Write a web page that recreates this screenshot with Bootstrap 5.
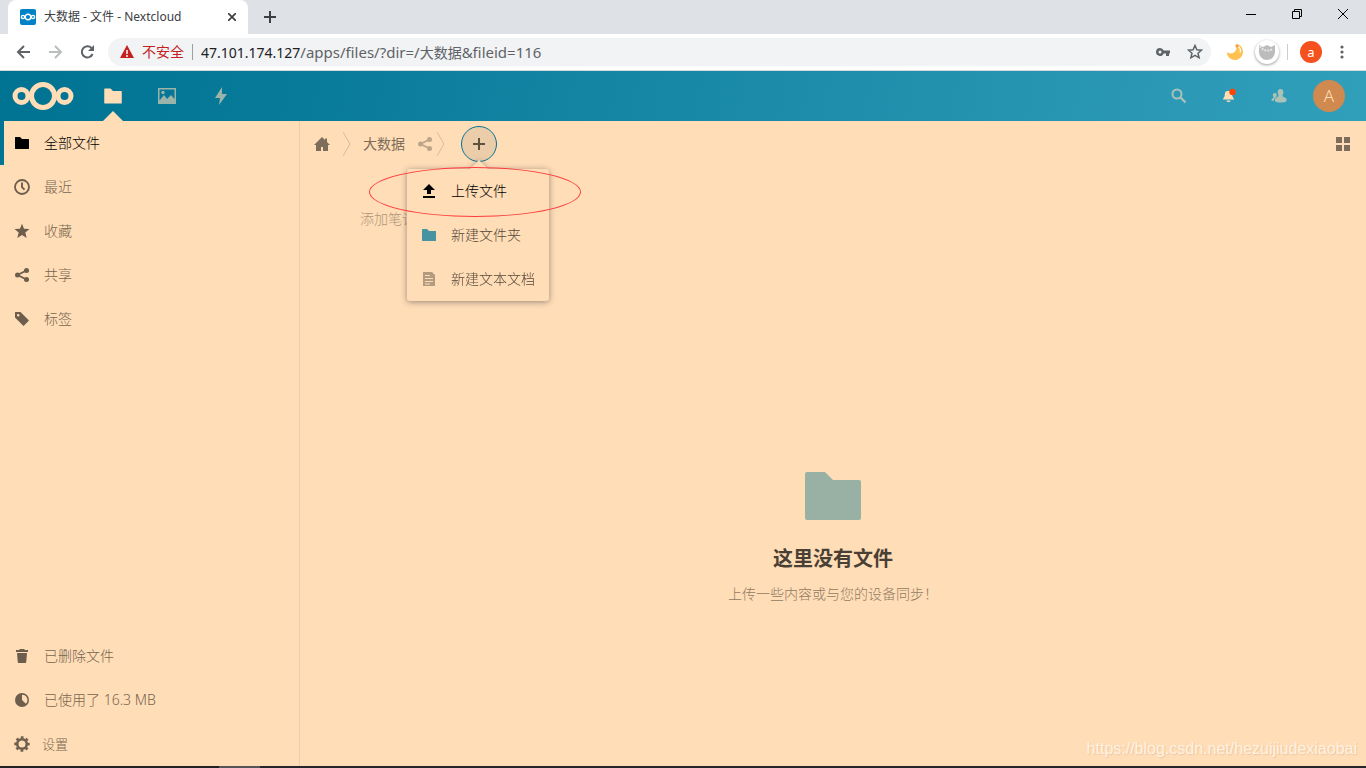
<!DOCTYPE html>
<html lang="zh-CN">
<head>
<meta charset="utf-8">
<meta name="viewport" content="width=device-width, initial-scale=1">
<title>大数据 - 文件 - Nextcloud</title>
<link href="https://cdn.jsdelivr.net/npm/bootstrap@5.3.0/dist/css/bootstrap.min.css" rel="stylesheet">
<style>
  :root { --paper: #ffddb7; --teal: #007494; }
  body { font-family: "Noto Sans", "Noto Sans CJK SC", sans-serif; font-size: 14px; line-height: 20px; background: var(--paper); color: #1e1a15; }
  button, input { font: inherit; color: inherit; }
  button { border: 0; background: none; padding: 0; display: flex; align-items: center; justify-content: center; }
  a { color: inherit; text-decoration: none; }
  svg { display: block; flex: none; }

  .tabstrip { height: 34px; background: #dee1e6; }
  .browser-tab { width: 240px; background: #fff; border-radius: 8px 8px 0 0; font-size: 12px; color: #3c4043; }
  .window-btn { width: 46px; height: 28px; color: #000; }
  .toolbar-row { height: 37px; background: #fff; border-bottom: 1px solid #d5d8dc; color: #5f6368; }
  .tool-btn { width: 32px; height: 32px; }
  .omnibox { height: 28px; border-radius: 14px; background: #f1f3f4; }
  .insecure { color: #c5221f; }
  .url-divider { width: 1px; height: 16px; background: #9aa0a6; }
  .url-host { color: #202124; }
  .url-path { font-size: 15px; }
  .ext-round { width: 24px; height: 24px; border-radius: 50%; background: #fff; box-shadow: 0 1px 3px #0006; }
  .profile { width: 22px; height: 22px; border-radius: 50%; background: #f4511e; color: #fff; font-size: 13px; line-height: 20px; }

  .cloud-header { height: 50px; background: linear-gradient(100deg, #007392 0%, #0a7c9b 25%, #2b99b6 85%, #309fba 100%); color: var(--paper); }
  .app-link { width: 54px; height: 50px; }
  .app-link.current::after { content: ""; position: absolute; bottom: 0; left: 50%; margin-left: -10px; border: 10px solid transparent; border-top: 0; border-bottom-color: var(--paper); }
  .dim { opacity: .6; }
  .head-btn { width: 50px; height: 50px; }
  .avatar { width: 32px; height: 32px; border-radius: 50%; background: #d0894f; color: var(--paper); font-size: 17px; font-weight: 300; }

  .sidebar { width: 300px; border-right: 1px solid #edcdaa; font-weight: 300; }
  .side-item { height: 44px; padding-left: 14px; gap: 14px; color: #78664f; }
  .side-item svg { color: #6c5d4c; width: 16px; height: 16px; }
  .side-item.current { color: #000; box-shadow: inset 4px 0 var(--teal); }
  .side-item.current svg { color: #000; }
  .side-item.settings { font-size: 13px; gap: 12px; width: 100%; justify-content: flex-start; }

  .crumbs { height: 46px; color: #7e6d5a; }
  .crumb-home { width: 43px; height: 44px; }
  .add-btn { width: 36px; height: 36px; border-radius: 50%; border: 1px solid var(--teal); background: #eccdaa; color: #5e5142; }
  .add-menu { top: 43px; left: -54px; width: 142px; background: var(--paper); border-radius: 3px; filter: drop-shadow(0 1px 3px #4d424b90); z-index: 2; font-weight: 300; }
  .add-menu::before { content: ""; position: absolute; top: -9px; left: 63px; border: 9px solid transparent; border-top: 0; border-bottom-color: var(--paper); }
  .menu-btn { height: 44px; width: 100%; padding-left: 14px; gap: 14px; justify-content: flex-start; color: #554839; white-space: nowrap; }
  .menu-btn.current { color: #000; }
  .marker-ring { top: 41px; left: -92px; width: 212px; height: 50px; border: 1px solid #ff3a3a; border-radius: 50%; z-index: 3; pointer-events: none; }
  .note-input { width: 160px; margin: 42px 0 0 60px; padding: 0; height: 20px; border: 0; background: none; font-weight: 300; }
  .note-input::placeholder { color: #b0967b; opacity: 1; }
  .empty-title { font-size: 20px; line-height: 30px; font-weight: 700; color: #493f34; margin: 24px 0 10px; }
  .empty-text { color: #917b64; font-weight: 300; }
  .empty-box { padding-top: 80px; }
  .watermark { right: 9px; bottom: 7px; font: 16px/20px "Liberation Sans", sans-serif; color: #fff2e1; text-shadow: 1px 1px 1px #d9b89488; }
  .taskbar-edge { height: 2px; background: linear-gradient(90deg, #222 0 16%, #555 16% 19%, #25252b 19%); }
</style>
</head>
<body class="vh-100 d-flex flex-column overflow-hidden">

<svg class="d-none" aria-hidden="true">
  <symbol id="folder" viewBox="0 0 16 16"><path fill="currentColor" d="M1.5 2a.5.5 0 0 0-.5.5v11c0 .3.2.5.5.5h13c.3 0 .5-.2.5-.5v-9a.5.5 0 0 0-.5-.5H8L6 2z"/></symbol>
  <symbol id="share" viewBox="0 0 16 16"><path fill="none" stroke="currentColor" stroke-width="1.8" d="M12.500 3.500 3.500 8l9 4.500"/><g fill="currentColor"><circle cx="12.500" cy="3.500" r="2.500"/><circle cx="3.500" cy="8" r="2.500"/><circle cx="12.500" cy="12.500" r="2.500"/></g></symbol>
  <symbol id="rings" viewBox="0 0 62 28"><g fill="none" stroke="currentColor" stroke-width="5"><circle cx="31" cy="14" r="11.500"/><circle cx="9.500" cy="14" r="6.500"/><circle cx="52.500" cy="14" r="6.500"/></g></symbol>
</svg>

<div class="tabstrip d-flex flex-shrink-0">
  <div class="browser-tab ms-2 d-flex align-items-center px-2">
    <svg class="ms-1 me-2" width="16" height="16"><rect width="16" height="16" rx="2" fill="#0082c9"/><g fill="none" stroke="#fff" stroke-width="1.400"><circle cx="8" cy="8" r="2.800"/><circle cx="3" cy="8" r="1.600"/><circle cx="13" cy="8" r="1.600"/></g></svg>
    <span class="flex-fill">大数据 - 文件 - Nextcloud</span>
    <button aria-label="关闭标签页" class="me-1"><svg width="8" height="8"><path d="m0 0 8 8M8 0 0 8" stroke="#3c4043" stroke-width="1.700"/></svg></button>
  </div>
  <button aria-label="新标签页" class="ms-3"><svg width="12" height="12"><path d="M6 0v12M0 6h12" stroke="#3c4043" stroke-width="2"/></svg></button>
  <div class="ms-auto d-flex">
    <button class="window-btn" aria-label="最小化"><svg width="10" height="10"><path d="M0 5.500h10" stroke="#000"/></svg></button>
    <button class="window-btn" aria-label="还原"><svg width="10" height="10"><path d="M.5 2.500h7v7h-7zM2.500 2.500v-2h7v7h-2" fill="none" stroke="#000"/></svg></button>
    <button class="window-btn" aria-label="关闭"><svg width="10" height="10"><path d="m0 0 10 10M10 0 0 10" stroke="#000"/></svg></button>
  </div>
</div>

<div class="toolbar-row d-flex align-items-center flex-shrink-0 px-1">
  <button class="tool-btn ms-1" aria-label="后退"><svg width="16" height="16"><path d="M14 8H2m6-6L2 8l6 6" fill="none" stroke="#5f6368" stroke-width="2"/></svg></button>
  <button class="tool-btn" aria-label="前进"><svg width="16" height="16"><path d="M1 8h12M7 2l6 6-6 6" fill="none" stroke="#babcbe" stroke-width="2"/></svg></button>
  <button class="tool-btn me-1" aria-label="刷新"><svg width="16" height="16"><path d="M12.600 10A5.600 5.600 0 1 1 11.500 4" fill="none" stroke="#5f6368" stroke-width="2"/><path d="M14 1v6H8z" fill="#5f6368"/></svg></button>
  <div class="omnibox flex-fill d-flex align-items-center ps-2">
    <svg class="ms-1 me-1" width="14" height="14"><path d="m7 0 7 13H0z" fill="#c5221f"/><path d="M7 5v4M7 10v2" stroke="#fff" stroke-width="1.500"/></svg>
    <span class="insecure ms-1">不安全</span>
    <span class="url-divider mx-2"></span>
    <span class="flex-fill text-truncate"><span class="url-host">47.101.174.127</span><span class="url-path">/apps/files/?dir=/</span>大数据<span class="url-path">&amp;fileid=116</span></span>
    <button class="tool-btn" aria-label="密码"><svg width="14" height="8"><path fill="#5f6368" fill-rule="evenodd" d="M4 0a4 4 0 0 1 3.700 2.500H14v3h-1V8h-3V5.500H7.700A4 4 0 1 1 4 0m0 2.500a1.500 1.500 0 1 0 0 3 1.500 1.500 0 0 0 0-3"/></svg></button>
    <button class="tool-btn" aria-label="收藏此页"><svg width="16" height="16"><path d="m8 1.500 1.900 4.300 4.600.4L11 9.300l1.100 4.500L8 11.400l-4.100 2.400L5 9.300 1.500 6.200l4.600-.4z" fill="none" stroke="#5f6368" stroke-width="1.500"/></svg></button>
  </div>
  <div class="d-flex align-items-center">
    <button class="ms-3 me-2" aria-label="夜间模式"><svg width="16" height="16" viewBox="0 0 16 16"><path fill="#ffc150" d="M8.500 0C15 .5 17 6 15.500 10.500 14 15 9 17 5 15.500A8 8 0 0 1 0 8c2 2 6 2 8-.500S10 2 8.500 0"/><path d="M11.500 2.500c2 2 2.500 4 1.500 6" fill="none" stroke="#fff" stroke-width="1.300"/><circle cx="10" cy="2" r="1.500" fill="#f8993e"/></svg></button>
    <button class="ext-round ms-1" aria-label="扩展程序"><svg width="18" height="18"><path d="M1 2 5 4l4-2 4 2 4-2v7a8 8 0 0 1-16 0z" fill="#bcbcbc"/><path d="M2 3q4 7 13 3" stroke="#e4e4e4" stroke-width="2" stroke-dasharray="2 1" fill="none"/></svg></button>
    <span class="url-divider mx-2 opacity-50"></span>
    <button class="profile ms-1" aria-label="个人资料">a</button>
    <button class="tool-btn ms-1 me-1" aria-label="菜单"><svg width="4" height="14" fill="#5f6368"><circle cx="2" cy="2" r="1.600"/><circle cx="2" cy="7" r="1.600"/><circle cx="2" cy="12" r="1.600"/></svg></button>
  </div>
</div>

<header class="cloud-header d-flex align-items-center flex-shrink-0">
  <a href="#" class="ms-2 me-2 ps-1" aria-label="Nextcloud"><svg width="62" height="28"><use href="#rings"/></svg></a>
  <nav class="d-flex ms-1" aria-label="应用">
    <a href="#" class="app-link current position-relative d-flex align-items-center justify-content-center" aria-label="文件"><svg width="20" height="20"><use href="#folder"/></svg></a>
    <a href="#" class="app-link d-flex align-items-center justify-content-center dim" aria-label="照片"><svg width="18" height="16"><path fill="currentColor" fill-rule="evenodd" d="M0 0h18v16H0zM1.500 1.500v11L6 7l3 4 4-4 3.500 4V1.500z"/><circle cx="5" cy="4.500" r="1.700" fill="currentColor"/></svg></a>
    <a href="#" class="app-link d-flex align-items-center justify-content-center dim" aria-label="动态"><svg width="14" height="18"><path fill="currentColor" d="M8 0 1 11h5l-1 7 8-11H8z"/></svg></a>
  </nav>
  <div class="ms-auto d-flex align-items-center pe-1 me-2">
    <button class="head-btn dim" aria-label="搜索"><svg width="16" height="16"><circle cx="6" cy="6" r="4.500" fill="none" stroke="currentColor" stroke-width="2"/><path d="m9.500 9.500 5 5" stroke="currentColor" stroke-width="2.400"/></svg></button>
    <button class="head-btn" aria-label="通知"><svg width="16" height="16"><path fill="currentColor" d="M7 3c-3 0-3 2-3.300 4.500C3.500 9.500 2 10 2 11.500h11c0-1.500-1.500-2-1.700-4C11 5 11 3 8 3zM5.500 12.500h4c0 2-4 2-4 0"/><circle cx="11.500" cy="4" r="3.200" fill="#ff4402"/></svg></button>
    <button class="head-btn dim" aria-label="联系人"><svg width="16" height="16"><path fill="currentColor" d="M9.500 1C7.500 1 6.500 2.500 6.700 4.500c.1 1.500.8 2 .8 3.300 0 1.200-2.500 1.400-3.500 3.200v2c1 2 10 2 11.500 0v-2c-1-1.800-4-2-4-3.200 0-1.300.8-1.800.9-3.300C12.600 2.500 11.500 1 9.500 1M3.700 5C2.300 5 1.700 6 1.900 7.200c.1 1 .6 1.300.6 2C2.500 10 1 10.500.5 11.500v1.300h2.700V11c.4-1 1.700-1.700 2.500-2.200-.4-.5.1-1 .1-1.700C5.900 5.800 5 5 3.700 5"/></svg></button>
    <button class="head-btn" aria-label="账号"><span class="avatar d-flex align-items-center justify-content-center">A</span></button>
  </div>
</header>

<div class="d-flex flex-fill overflow-hidden">
  <nav class="sidebar d-flex flex-column flex-shrink-0" aria-label="文件视图">
    <a href="#" class="side-item current d-flex align-items-center"><svg><use href="#folder"/></svg>全部文件</a>
    <a href="#" class="side-item d-flex align-items-center"><svg viewBox="0 0 16 16"><circle cx="8" cy="8" r="7" fill="none" stroke="currentColor" stroke-width="1.800"/><path d="M8 3.500v4.700l2.500 2.500" fill="none" stroke="currentColor" stroke-width="1.900"/></svg>最近</a>
    <a href="#" class="side-item d-flex align-items-center"><svg viewBox="0 0 16 16"><path fill="currentColor" d="m8 .7 2 5.100 5.500.3-4.200 3.500 1.400 5.300L8 12l-4.700 2.900 1.400-5.300L.5 6.100 6 5.800z"/></svg>收藏</a>
    <a href="#" class="side-item d-flex align-items-center"><svg><use href="#share"/></svg>共享</a>
    <a href="#" class="side-item d-flex align-items-center"><svg viewBox="0 0 16 16"><path fill="currentColor" fill-rule="evenodd" d="M1 1.500v5L9.500 15l5.500-5.500L6.500 1h-5zM4.200 3a1.300 1.300 0 1 1 0 2.600 1.300 1.300 0 0 1 0-2.600"/></svg>标签</a>
    <div class="mt-auto">
      <a href="#" class="side-item d-flex align-items-center"><svg viewBox="0 0 16 16"><path fill="currentColor" d="M6 1 5 2H2v2h12V2h-3l-1-1zM3 5l.8 9.200c0 .4.400.8.8.8h6.800c.4 0 .8-.4.8-.8L13 5z"/></svg>已删除文件</a>
      <a href="#" class="side-item d-flex align-items-center"><svg viewBox="0 0 16 16"><circle cx="8" cy="8" r="7" fill="currentColor"/><path fill="#ffddb7" d="M8 2.700V8l3.800 3.800A5.300 5.300 0 0 0 8 2.700"/></svg>已使用了 16.3 MB</a>
      <button class="side-item settings"><svg viewBox="0 0 16 16"><circle cx="8" cy="8" r="4.800" fill="none" stroke="currentColor" stroke-width="2.600"/><circle cx="8" cy="8" r="6.700" fill="none" stroke="currentColor" stroke-width="2" stroke-dasharray="2.800 2.460" stroke-dashoffset="1.400"/></svg>设置</button>
    </div>
  </nav>

  <main class="flex-fill d-flex flex-column position-relative">
    <div class="crumbs d-flex align-items-center flex-shrink-0">
      <a href="#" class="crumb-home d-flex align-items-center justify-content-center" aria-label="主目录"><svg width="16" height="16"><path fill="currentColor" d="m8 1 3 3V2.500h2V6l3 3h-2v6H9v-4H7v4H2V9H0z"/></svg></a>
      <svg width="8" height="24"><path d="m0 0 7 12-7 12" fill="none" stroke="#d8bb9b"/></svg>
      <a href="#" class="ms-2 ps-1">大数据</a>
      <button class="ms-2 ps-1 opacity-50" aria-label="共享"><svg width="16" height="16"><use href="#share"/></svg></button>
      <svg class="ms-1" width="8" height="24"><path d="m0 0 7 12-7 12" fill="none" stroke="#d8bb9b"/></svg>
      <div class="position-relative ms-3">
        <button class="add-btn" aria-label="新建" aria-expanded="true"><svg width="12" height="12"><path d="M6 0v12M0 6h12" stroke="currentColor" stroke-width="2"/></svg></button>
        <div class="add-menu position-absolute">
          <button class="menu-btn current"><svg width="16" height="16"><path fill="currentColor" d="m8 1 6 6h-4v4H6V7H2zM2 13h12v2H2z"/></svg>上传文件</button>
          <button class="menu-btn"><svg width="16" height="16" color="#4793a1"><use href="#folder"/></svg>新建文件夹</button>
          <button class="menu-btn"><svg width="16" height="16"><path fill="#b39b80" d="M2 1h9l3 3v11H2z"/><path d="M4 4.500h5M4 7.500h8M4 10.500h8M4 13h5" stroke="#ffddb7"/></svg>新建文本文档</button>
        </div>
        <div class="marker-ring position-absolute"></div>
      </div>
      <button class="ms-auto me-3" aria-label="网格视图"><svg width="14" height="14"><path fill="currentColor" d="M0 0h6v6H0zM8 0h6v6H8zM0 8h6v6H0zM8 8h6v6H8z"/></svg></button>
    </div>
    <input class="note-input flex-shrink-0" placeholder="添加笔记" aria-label="添加笔记">
    <section class="empty-box flex-fill d-flex flex-column align-items-center justify-content-center text-center">
      <svg width="56" height="48"><path fill="#99b1a5" d="M2 0h18l8 8h26a2 2 0 0 1 2 2v36a2 2 0 0 1-2 2H2a2 2 0 0 1-2-2V2a2 2 0 0 1 2-2"/></svg>
      <h2 class="empty-title">这里没有文件</h2>
      <p class="empty-text mb-0">上传一些内容或与您的设备同步！</p>
    </section>
    <div class="watermark position-absolute">https://blog.csdn.net/hezuijiudexiaobai</div>
  </main>
</div>
<div class="taskbar-edge flex-shrink-0"></div>
<script src="https://cdn.jsdelivr.net/npm/bootstrap@5.3.0/dist/js/bootstrap.bundle.min.js"></script>
</body>
</html>
